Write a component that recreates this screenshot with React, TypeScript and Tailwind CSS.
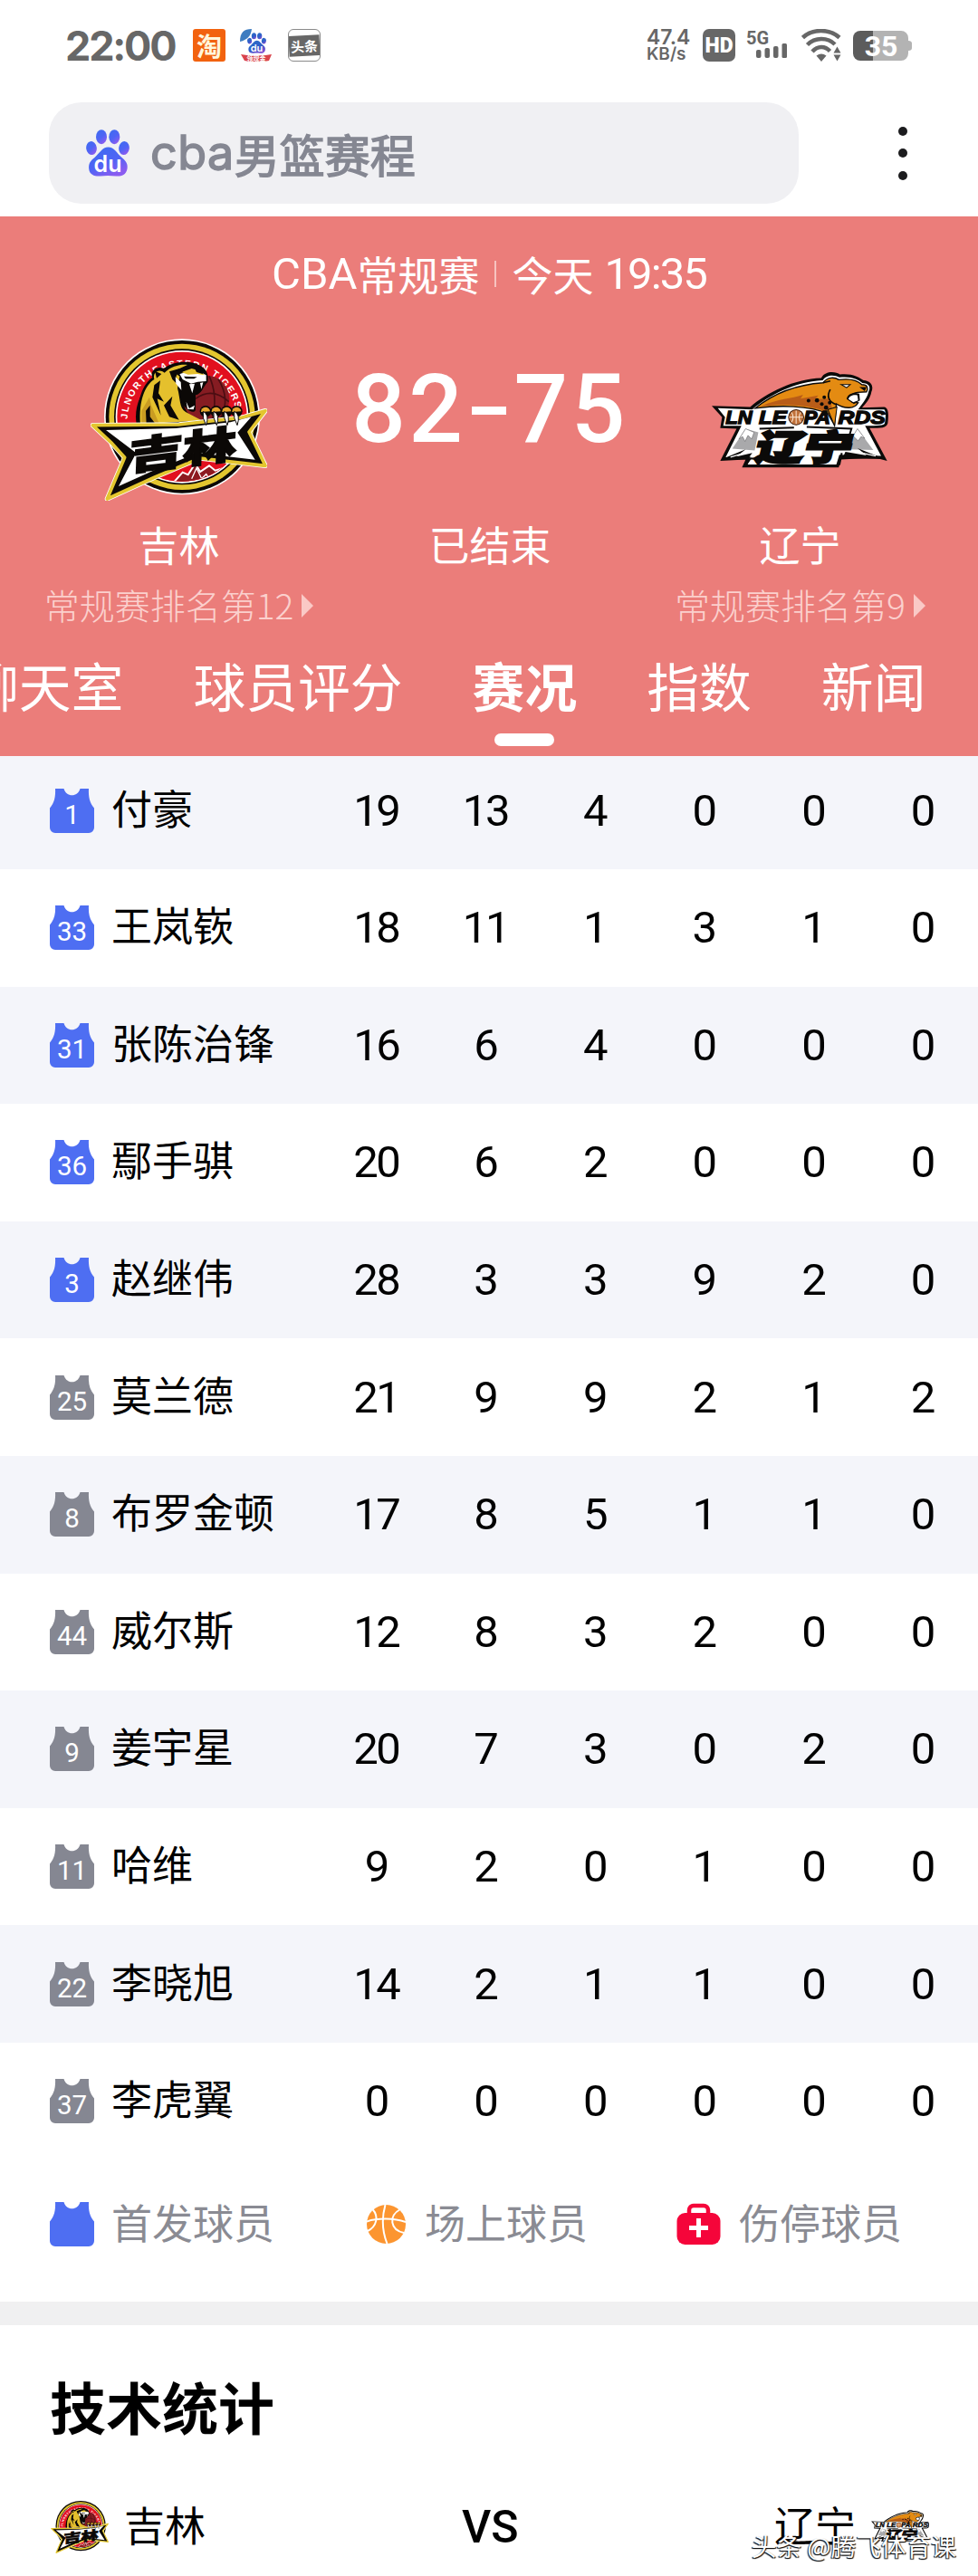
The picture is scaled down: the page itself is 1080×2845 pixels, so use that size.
import React from 'react'
import { clsx } from 'clsx'

interface Player {
  num: number
  name: string
  starter: boolean
  stats: number[]
}

const PLAYERS: Player[] = [
  { num: 1, name: '付豪', starter: true, stats: [19, 13, 4, 0, 0, 0] },
  { num: 33, name: '王岚嵚', starter: true, stats: [18, 11, 1, 3, 1, 0] },
  { num: 31, name: '张陈治锋', starter: true, stats: [16, 6, 4, 0, 0, 0] },
  { num: 36, name: '鄢手骐', starter: true, stats: [20, 6, 2, 0, 0, 0] },
  { num: 3, name: '赵继伟', starter: true, stats: [28, 3, 3, 9, 2, 0] },
  { num: 25, name: '莫兰德', starter: false, stats: [21, 9, 9, 2, 1, 2] },
  { num: 8, name: '布罗金顿', starter: false, stats: [17, 8, 5, 1, 1, 0] },
  { num: 44, name: '威尔斯', starter: false, stats: [12, 8, 3, 2, 0, 0] },
  { num: 9, name: '姜宇星', starter: false, stats: [20, 7, 3, 0, 2, 0] },
  { num: 11, name: '哈维', starter: false, stats: [9, 2, 0, 1, 0, 0] },
  { num: 22, name: '李晓旭', starter: false, stats: [14, 2, 1, 1, 0, 0] },
  { num: 37, name: '李虎翼', starter: false, stats: [0, 0, 0, 0, 0, 0] },
]

const TABS = ['聊天室', '球员评分', '赛况', '指数', '新闻']

function Paw({ className, small }: { className?: string; small?: boolean }) {
  const id = small ? 'paw-s' : 'paw-l'
  return (
    <svg viewBox="0 0 48 52" className={className}>
      <defs>
        <linearGradient id={id} x1="0" y1="0" x2="0.6" y2="1">
          <stop offset="0" stopColor={small ? '#2f6fc4' : '#3c6cf0'} />
          <stop offset="0.6" stopColor={small ? '#2c5fc9' : '#4f64f5'} />
          <stop offset="1" stopColor={small ? '#7a4fd0' : '#8a5cf0'} />
        </linearGradient>
      </defs>
      <g fill={`url(#${id})`}>
        <ellipse cx="17" cy="8.2" rx="6" ry="8" />
        <ellipse cx="31.3" cy="8.2" rx="6" ry="8" />
        <ellipse cx="6" cy="20.6" rx="5.8" ry="7.5" transform="rotate(-8 6 20.6)" />
        <ellipse cx="42" cy="20.6" rx="5.8" ry="7.5" transform="rotate(8 42 20.6)" />
        <path d="M24.500 19.500 C31 19.500 34 26 39 30.500 C44 34.500 46.500 38 45.500 43.500 C44 51 38 52 33 51.500 C27 50.800 21 50.800 16 51.500 C10 52 4 50.500 3.200 43.500 C2.600 37.500 5 34.500 9.500 31 C15 26 18 19.500 24.500 19.500 Z" />
      </g>
      <text x="24" y="47" textAnchor="middle" fill="#fff" fontSize="25" fontWeight="600" fontFamily="Inter, sans-serif">
        du
      </text>
    </svg>
  )
}

function Jersey({ num, starter }: { num?: number; starter: boolean }) {
  return (
    <svg viewBox="0 0 49 49" className="h-[49px] w-[49px] shrink-0">
      <path
        d="M6 0 H15.500 C17 4.800 20.500 7.300 24.500 7.300 C28.500 7.300 32 4.800 33.500 0 H43 C42.500 9 44 15.500 49 21.500 V43 A6 6 0 0 1 43 49 H6 A6 6 0 0 1 0 43 V21.500 C5 15.500 6.500 9 6 0 Z"
        fill={starter ? '#4e6ef2' : '#858792'}
      />
      {num !== undefined && (
        <text x="24.500" y="38.500" textAnchor="middle" fill="#fff" fontSize="29.500" fontFamily="Roboto, sans-serif">
          {num}
        </text>
      )}
    </svg>
  )
}

function JilinLogo({ className, id }: { className?: string; id: string }) {
  return (
    <svg viewBox="57 38 585 540" className={className}>
      <defs>
        <path id={`${id}-arc`} d="M179 308 A182 182 0 0 1 541 290" />
        <clipPath id={`${id}-clip`}>
          <circle cx="360" cy="300" r="214" />
        </clipPath>
      </defs>
      <circle cx="360" cy="300" r="258" fill="#fff" />
      <circle cx="360" cy="300" r="253" fill="#0b0806" />
      <circle cx="360" cy="300" r="242" fill="#e3c62f" />
      <circle cx="360" cy="300" r="225" fill="#0b0806" />
      <circle cx="360" cy="300" r="220" fill="#fff" />
      <circle cx="360" cy="300" r="215" fill="#e2101f" />
      <circle cx="360" cy="300" r="153" fill="#0b0806" />
      <text fill="#fff" fontSize="31" fontWeight="700" fontFamily="'Liberation Sans', sans-serif">
        <textPath href={`#${id}-arc`} textLength="520" lengthAdjust="spacing">
          JLNORTHEASTERN TIGERS
        </textPath>
      </text>
      {/* ball */}
      <circle cx="440" cy="240" r="77" fill="#861c22" />
      <g fill="none" stroke="#4b0d12" strokeWidth="5">
        <path d="M405 240 Q460 200 515 250 M450 165 Q480 230 460 310 M480 175 Q520 240 490 300" />
      </g>
      {/* tiger */}
      <path d="M215 330 C208 240 232 190 262 170 C252 145 280 130 300 140 C330 115 385 112 415 128 C440 138 450 160 445 185 C430 200 425 225 405 228 L405 278 C395 295 365 270 352 240 L365 300 L430 320 Z" fill="#0b0806" />
      <path d="M222 325 C216 245 238 195 268 176 C262 150 285 140 302 154 C325 132 355 125 378 128 L330 150 L352 166 L345 205 C355 240 350 270 372 284 L425 312 Z" fill="#e5c02d" />
      <path d="M226 280 L252 235 L258 262 L284 322 L226 325 Z" fill="#c99c22" />
      <path d="M268 195 L288 180 L282 222 L300 250 L278 240 L290 295 L262 235 Z M300 262 L328 232 L322 262 L350 310 L318 300 Z M240 280 L254 262 L254 300 L274 326 L242 326 Z M270 148 L292 158 L276 172 Z M318 150 L352 140 L340 168 L352 200 L328 176 Z" fill="#0b0806" />
      <path d="M352 158 L382 150 L412 148 L440 162 L440 182 L412 184 L390 190 L362 176 Z" fill="#fff" />
      <path d="M338 168 L356 185 L358 212 L340 190 Z" fill="#fff" />
      <path d="M358 152 L392 140 L422 148 L434 162 L412 158 L380 160 Z" fill="#e5c02d" />
      <path d="M335 146 L368 146 L352 158 Z M402 140 L432 148 L428 158 L408 152 Z M366 166 L410 168 L400 174 L372 174 Z" fill="#0b0806" />
      <path d="M384 192 L394 222 L402 190 Z M420 188 L424 208 L430 186 Z M374 250 L384 272 L402 262 L398 276 L378 274 Z" fill="#fff" />
      {/* lower half of the badge */}
      <g clipPath={`url(#${id}-clip)`}>
        <path d="M160 350 L600 330 L600 560 L160 560 Z" fill="#e2101f" />
        <path d="M335 525 L360 482 L380 490 L405 450 L430 480 L450 462 L530 520 Z" fill="#8d1a20" />
        <path d="M330 520 L362 484 L380 492 L404 455 L420 482 L450 462 L470 478 L510 466" fill="none" stroke="#fff" strokeWidth="6" />
        <path d="M392 505 L408 470 L425 505 L440 490 L450 505" fill="none" stroke="#fff" strokeWidth="4" />
      </g>
      {/* banner */}
      <path d="M64 328 L350 326 L560 302 L636 280 L582 350 L636 462 L420 437 L270 500 L112 572 L170 435 L128 388 Z" fill="#0b0806" stroke="#fff" strokeWidth="16" strokeLinejoin="round" />
      <path d="M64 328 L350 326 L560 302 L636 280 L582 350 L636 462 L420 437 L270 500 L112 572 L170 435 L128 388 Z" fill="#0b0806" stroke="#e3c62f" strokeWidth="11" strokeLinejoin="round" />
      <path d="M108 344 L340 338 L520 318 L590 300 L544 352 L602 442 L412 420 L270 476 L150 530 L208 420 Z" fill="#fff" />
      <g transform="translate(184 478) rotate(-7) skewX(-9) scale(1.42 1)">
        <text fill="#0b0806" stroke="#0b0806" strokeWidth="5" fontSize="126" fontWeight="900" fontFamily="'Noto Sans CJK SC', sans-serif">
          吉林
        </text>
      </g>
      {/* claws */}
      <g>
        {[440, 475, 510, 543].map((x) => (
          <g key={x}>
            <circle cx={x - 2} cy="282" r="19" fill="#0b0806" />
            <path d={`M${x - 17} 284 a15 15 0 0 1 30 -2 z`} fill="#e5a52d" />
            <path d={`M${x - 10} 282 Q${x + 12} 292 ${x} 328 Q${x - 14} 304 ${x - 10} 282 Z`} fill="#fff" stroke="#0b0806" strokeWidth="3" />
          </g>
        ))}
      </g>
    </svg>
  )
}

function LiaoningLogo({ className }: { className?: string }) {
  return (
    <svg viewBox="78 60 584 320" className={className}>
      {/* black silhouette with white inner edge */}
      <path
        d="M78 174 L205 178 C260 130 350 85 440 82 C455 55 490 62 502 70 C540 66 565 78 580 90 C606 92 614 110 606 128 C602 150 590 165 575 180 L648 178 C662 180 664 200 660 232 C655 248 640 248 600 248 L658 356 L618 346 L505 352 L498 378 L178 378 L190 352 L106 356 L160 250 L106 248 L112 212 Z"
        fill="#0b0a09"
      />
      <path
        d="M98 182 L212 186 C270 138 350 96 445 90 C458 70 484 72 500 80 C540 76 562 86 576 99 C598 100 604 112 597 126 C593 146 582 160 562 186 L648 186 C654 190 654 210 650 232 C646 240 630 240 585 240 L638 340 L500 336 L490 368 L196 368 L206 342 L124 344 L176 240 L116 240 L122 212 Z"
        fill="#fff"
      />
      {/* mountains */}
      <path d="M146 316 L190 250 L232 262 L220 322 Z M530 318 L560 250 L612 320 Z" fill="#a9a9ab" />
      <path d="M168 284 L190 250 L218 262 L210 284 L198 272 L188 292 L180 276 Z M545 274 L560 250 L584 282 L572 276 L562 290 Z" fill="#fff" stroke="#6d6d6f" strokeWidth="2" />
      <path d="M112 350 L190 318 L160 342 L212 330 L196 352 Z M650 350 L560 314 L590 338 L520 326 L510 348 Z" fill="#0b0a09" />
      <path d="M140 344 L200 326 M620 340 L540 322" fill="none" stroke="#fff" strokeWidth="4" />
      {/* leopard */}
      <path d="M222 182 C280 135 360 104 446 98 C462 76 486 80 498 88 C540 82 562 92 574 104 C594 104 596 116 590 128 L560 130 C540 132 530 146 542 162 L562 164 C550 184 520 186 490 168 L484 238 L462 200 C400 172 300 172 222 182 Z" fill="#e48b12" stroke="#0b0a09" strokeWidth="4" />
      <path d="M240 176 C300 150 340 152 380 138 L372 150 L430 140 L420 152 L470 150 L484 230 L462 196 C400 168 300 168 240 176 Z" fill="#b95d18" />
      <path d="M470 120 C458 140 462 160 490 170 M446 98 L470 92" fill="none" stroke="#0b0a09" strokeWidth="5" />
      <path d="M506 104 L536 104 L524 114 Z" fill="#fff" stroke="#0b0a09" strokeWidth="3" />
      <path d="M566 112 L590 112 L584 126 Z M524 152 C526 136 545 128 566 134 L568 156 L548 168 Z" fill="#0b0a09" />
      <path d="M530 152 C532 142 548 136 560 140 L562 156 L546 162 Z" fill="#fff" />
      <g fill="#0b0a09">
        <circle cx="398" cy="157" r="6" />
        <circle cx="426" cy="156" r="7" />
        <circle cx="450" cy="146" r="6" />
        <circle cx="442" cy="168" r="6" />
        <circle cx="456" cy="180" r="7" />
        <circle cx="468" cy="164" r="6" />
        <circle cx="470" cy="196" r="6" />
      </g>
      {/* wordmark */}
      <g fontFamily="'Liberation Sans', sans-serif" fontWeight="700" fontStyle="italic" fontSize="60">
        <g fill="#0b0a09" stroke="#0b0a09" strokeWidth="4">
          <text x="124" y="233" textLength="88" lengthAdjust="spacingAndGlyphs">LN</text>
          <text x="234" y="233" textLength="92" lengthAdjust="spacingAndGlyphs">LE</text>
          <text x="382" y="233" textLength="88" lengthAdjust="spacingAndGlyphs">PA</text>
          <text x="496" y="233" textLength="156" lengthAdjust="spacingAndGlyphs">RDS</text>
        </g>
      </g>
      <path d="M462 186 L492 178 L484 240 Z" fill="#e48b12" stroke="#0b0a09" strokeWidth="3" />
      <circle cx="357" cy="212" r="25" fill="#c0713a" stroke="#3a1c0c" strokeWidth="3" />
      <path d="M334 212 H380 M357 190 V234 M342 196 Q352 212 342 228 M372 196 Q362 212 372 228" fill="none" stroke="#fbe6d2" strokeWidth="3" />
      <g transform="translate(216 354) skewX(-14) scale(1.4 1)">
        <text fill="#0b0a09" stroke="#0b0a09" strokeWidth="8" fontSize="114" fontWeight="900" fontFamily="'Noto Sans CJK SC', sans-serif">
          辽宁
        </text>
      </g>
      <path d="M236 250 L350 246 M392 244 L540 250 L530 282 M190 372 L206 348 L240 350 M500 370 L508 330" fill="none" stroke="#0b0a09" strokeWidth="6" />
    </svg>
  )
}

function StatusBar() {
  return (
    <div className="flex h-[100px] items-center pl-[72px] pr-[72px] text-[#676767]">
      <span className="w-[122px] whitespace-nowrap font-['Inter'] text-[45px] leading-none font-bold tracking-[-2.200px]">22:00</span>
      <span className="ml-[19px] flex h-9 w-9 items-center justify-center rounded-[3px] bg-[#f2620f] text-[28px] leading-none font-bold text-[#fff6dc]">
        淘
      </span>
      <svg viewBox="0 0 36 36" className="ml-[16px] h-9 w-9">
        <path d="M0 14 C0 4 4 0 13 0 C12 8 8 12 0 14 Z" fill="#3d7cc0" />
        <g transform="translate(8 4)">
          <Paw small className="h-[23px] w-[21px]" />
        </g>
        <path d="M1 28 Q18 31 35 28 L32 35 Q18 38 5 35 Z" fill="#d9434a" />
        <text x="18" y="35" fontSize="7" fontWeight="700" fill="#fff" textAnchor="middle">领现金</text>
      </svg>
      <span className="ml-[17px] flex h-9 w-9 flex-col justify-center overflow-hidden rounded-md border border-[#8a8a8a] bg-white">
        <span className="flex h-[23px] -rotate-3 items-center justify-center bg-[#676767] text-[15px] leading-none font-bold text-white">头条</span>
      </span>

      <div className="ml-auto flex items-center">
        <span className="flex w-[49px] flex-col font-['Inter'] font-semibold">
          <span className="text-[23px] leading-[19px]">47.4</span>
          <span className="text-[19px] leading-[17px]">KB/s</span>
        </span>
        <span className="ml-[13px] flex h-9 w-9 items-center justify-center rounded-[7px] bg-[#676767] font-['Roboto'] text-[23px] leading-none font-black text-white">
          HD
        </span>
        <svg viewBox="0 0 46 36" className="ml-[12px] h-9 w-[46px]" fill="currentColor">
          <text x="0" y="17" fontSize="20" fontWeight="700" fontFamily="Roboto, sans-serif">5G</text>
          <rect x="11" y="23" width="5.500" height="9" rx="2" />
          <rect x="20.500" y="21" width="5.500" height="11" rx="2" />
          <rect x="30" y="19" width="5.500" height="13" rx="2" />
          <rect x="39.500" y="16" width="5.500" height="16" rx="1.500" />
        </svg>
        <svg viewBox="0 0 44 36" className="ml-[15px] h-9 w-[44px]" fill="none" stroke="currentColor" strokeWidth="4.500">
          <path d="M1.500 9.500 C12 -0.500 31 -0.500 42 9.500" />
          <path d="M6.500 17.500 C15 9 29 9 37 17" />
          <path d="M12 25 C18 18.500 26 18.500 31.500 24.500" />
          <path d="M16.500 29.500 Q22 25.500 27.500 29.500 L22 36 Z" fill="currentColor" stroke="none" />
          <path d="M39.500 19.500 L43.500 26.500 H35.500 Z M39.500 35.500 L43.500 28.500 H35.500 Z" fill="currentColor" stroke="none" />
        </svg>
        <svg viewBox="0 0 66 33" className="ml-[13px] h-[33px] w-[66px]">
          <path d="M22 0 H53 A8 8 0 0 1 61 8 V11 Q65 11 65 14 V19 Q65 22 61 22 V25 A8 8 0 0 1 53 33 H22 Z" fill="#b3b3b3" />
          <path d="M22 0 H8 A8 8 0 0 0 0 8 V25 A8 8 0 0 0 8 33 H22 Z" fill="#5c5c5c" />
          <text x="31" y="28" textAnchor="middle" fill="#fff" fontSize="32" fontWeight="700" fontFamily="Roboto, sans-serif">35</text>
        </svg>
      </div>
    </div>
  )
}

function SearchBar() {
  return (
    <div className="flex items-center pt-[13px] pb-[14px] pl-[54px]">
      <div className="flex h-[112px] w-[828px] items-center rounded-[36px] bg-[#f0f0f3] pl-[41px]">
        <Paw className="h-[52px] w-[48px]" />
        <span className="ml-[23px] flex items-center text-[50px] leading-[60px] text-[#858792] [-webkit-text-stroke:1.500px_#858792]">
          <span className="font-['Inter'] text-[52px] tracking-[0.500px]">cba</span>
          <span>男篮赛程</span>
        </span>
      </div>
      <div className="ml-[110px] flex flex-col gap-[14.500px]">
        <i className="h-[10px] w-[10px] rounded-full bg-[#1c1c1e]" />
        <i className="h-[10px] w-[10px] rounded-full bg-[#1c1c1e]" />
        <i className="h-[10px] w-[10px] rounded-full bg-[#1c1c1e]" />
      </div>
    </div>
  )
}

function TeamSide({ name, rank, children }: { name: string; rank: string; children: React.ReactNode }) {
  return (
    <div className="flex flex-col items-center pt-[45px]">
      <div className="flex h-[180px] items-center">{children}</div>
      <div className="mt-[23px] h-[50px] text-[45px] leading-[50px]">{name}</div>
      <div className="mt-[17px] flex h-[48px] items-center gap-[9px] text-[39px] leading-[48px] font-light text-[#fbd0cd]">
        <span>{rank}</span>
        <svg viewBox="0 0 13 26" className="mt-1 h-[26px] w-[13px]">
          <path d="M0 0 L13 13 L0 26 Z" fill="#fac9c6" />
        </svg>
      </div>
    </div>
  )
}

function MatchHeader() {
  return (
    <header className="relative z-10 h-[596px] overflow-hidden bg-[#eb7d7a] text-white">
      <div className="flex h-[89px] items-center justify-center pt-[38px] text-[45px] leading-[50px]">
        <span className="font-['Roboto'] text-[49px]">CBA</span>
        <span>常规赛</span>
        <i className="mx-[17px] h-[29px] w-[2px] bg-[#f7c3c0]" />
        <span>今天</span>
        <span className="ml-[12px] font-['Roboto'] text-[49px] tracking-[-1.900px]">19:35</span>
      </div>

      <div className="grid grid-cols-[395px_292px_393px]">
        <TeamSide name="吉林" rank="常规赛排名第12">
          <JilinLogo id="jl-head" className="h-[180px] w-[195px]" />
        </TeamSide>
        <div className="flex flex-col items-center pt-[45px]">
          <div className="flex h-[160px] items-center font-['Roboto'] text-[105px] leading-[120px] font-medium">
            <span className="tracking-[3.500px]">82</span>
            <i className="mr-[9px] ml-[6px] h-[9px] w-[38px] bg-white" />
            <span className="tracking-[3.500px]">75</span>
          </div>
          <div className="mt-[43px] h-[50px] text-[45px] leading-[50px]">已结束</div>
        </div>
        <TeamSide name="辽宁" rank="常规赛排名第9">
          <LiaoningLogo className="h-[107px] w-[195px]" />
        </TeamSide>
      </div>

      <nav className="-ml-[37px] flex w-max gap-[77px] pt-[36px] text-[57.800px] leading-[58px] whitespace-nowrap">
        {TABS.map((tab) => (
          <div key={tab} className={clsx('flex flex-col items-center', tab === '赛况' && 'font-bold')}>
            {tab}
            {tab === '赛况' && <i className="mt-[25px] h-[14px] w-[66px] rounded-full bg-white" />}
          </div>
        ))}
      </nav>
    </header>
  )
}

function PlayerTable() {
  return (
    <section className="-mt-[4.600px]">
      {PLAYERS.map((p, i) => (
        <div key={p.num} className={clsx('flex h-[129.600px] items-center pl-[55px]', i % 2 === 0 ? 'bg-[#f4f5fa]' : 'bg-white')}>
          <Jersey num={p.num} starter={p.starter} />
          <span className="-mt-[7px] ml-[19px] w-[232px] text-[45px] leading-[60px]">{p.name}</span>
          {p.stats.map((v, j) => (
            <span key={j} className="mt-px w-[120.600px] text-center font-['Roboto'] text-[49px] leading-[50px] tracking-[-2.500px]">
              {v}
            </span>
          ))}
        </div>
      ))}
    </section>
  )
}

function Legend() {
  return (
    <div className="flex h-[156.400px] items-start pt-[42px] pl-[55px] text-[45px] text-[#8a8b93]">
      <div className="flex w-[350px] items-center">
        <div className="mt-[4px]">
          <Jersey starter />
        </div>
        <span className="ml-[19px] leading-[52px]">首发球员</span>
      </div>
      <div className="flex w-[342px] items-center">
        <svg viewBox="0 0 43 43" className="mt-[5px] h-[43px] w-[43px]">
          <circle cx="21.500" cy="21.500" r="21.500" fill="#fc9530" />
          <g fill="none" stroke="#fff" strokeWidth="2">
            <path d="M0 18.500 C12 14.500 30 14.500 43 19" />
            <path d="M20.500 0 C16.500 14 17 29 22.500 43" />
            <path d="M6.500 5 C13.500 13 11 24 1 29" />
            <path d="M37 5 C23.500 12.500 26 28 41 31" />
          </g>
        </svg>
        <span className="ml-[21px] leading-[52px]">场上球员</span>
      </div>
      <div className="flex items-center">
        <svg viewBox="0 0 49 46" className="mt-[4px] h-[46px] w-[49px]">
          <path d="M14 12 V8 A5 5 0 0 1 19 3 H30 A5 5 0 0 1 35 8 V12" fill="none" stroke="#f5053a" strokeWidth="4.500" />
          <rect x="0.500" y="11" width="48" height="35" rx="9" fill="#f5053a" />
          <path d="M24.500 17 V38 M14 27.500 H35" stroke="#fff" strokeWidth="5" />
        </svg>
        <span className="ml-[20px] leading-[52px]">伤停球员</span>
      </div>
    </div>
  )
}

export default function App() {
  return (
    <div className="h-[2845px] w-[1080px] overflow-hidden bg-white font-['Noto_Sans_CJK_SC',sans-serif] text-black">
      <StatusBar />
      <SearchBar />
      <MatchHeader />
      <PlayerTable />
      <Legend />
      <div className="h-[26px] bg-[#f0f0f1]" />

      <section className="relative">
        <h2 className="pt-[51px] pl-[55px] text-[62px] leading-[76px] font-bold">技术统计</h2>
        <div className="mt-[61px] flex h-[70px] items-center pr-[54px] pl-[56px] text-[45px] leading-[60px]">
          <JilinLogo id="jl-foot" className="h-[59px] w-[64px]" />
          <span className="-mt-[6px] ml-[17px] w-[373px]">吉林</span>
          <span className="font-['Roboto'] text-[50px] font-medium">VS</span>
          <span className="-mt-[6px] ml-auto">辽宁</span>
          <LiaoningLogo className="-mt-[3px] ml-[17px] h-[35px] w-[64px]" />
        </div>
        {/* author stamp over the row */}
        <span className="absolute right-[24px] bottom-[-5px] text-[27.700px] leading-[40px] whitespace-nowrap text-white [text-shadow:-1px_1px_1px_#111,1px_1px_1px_#111]">
          头条 @腾飞体育课
        </span>
      </section>
    </div>
  )
}
